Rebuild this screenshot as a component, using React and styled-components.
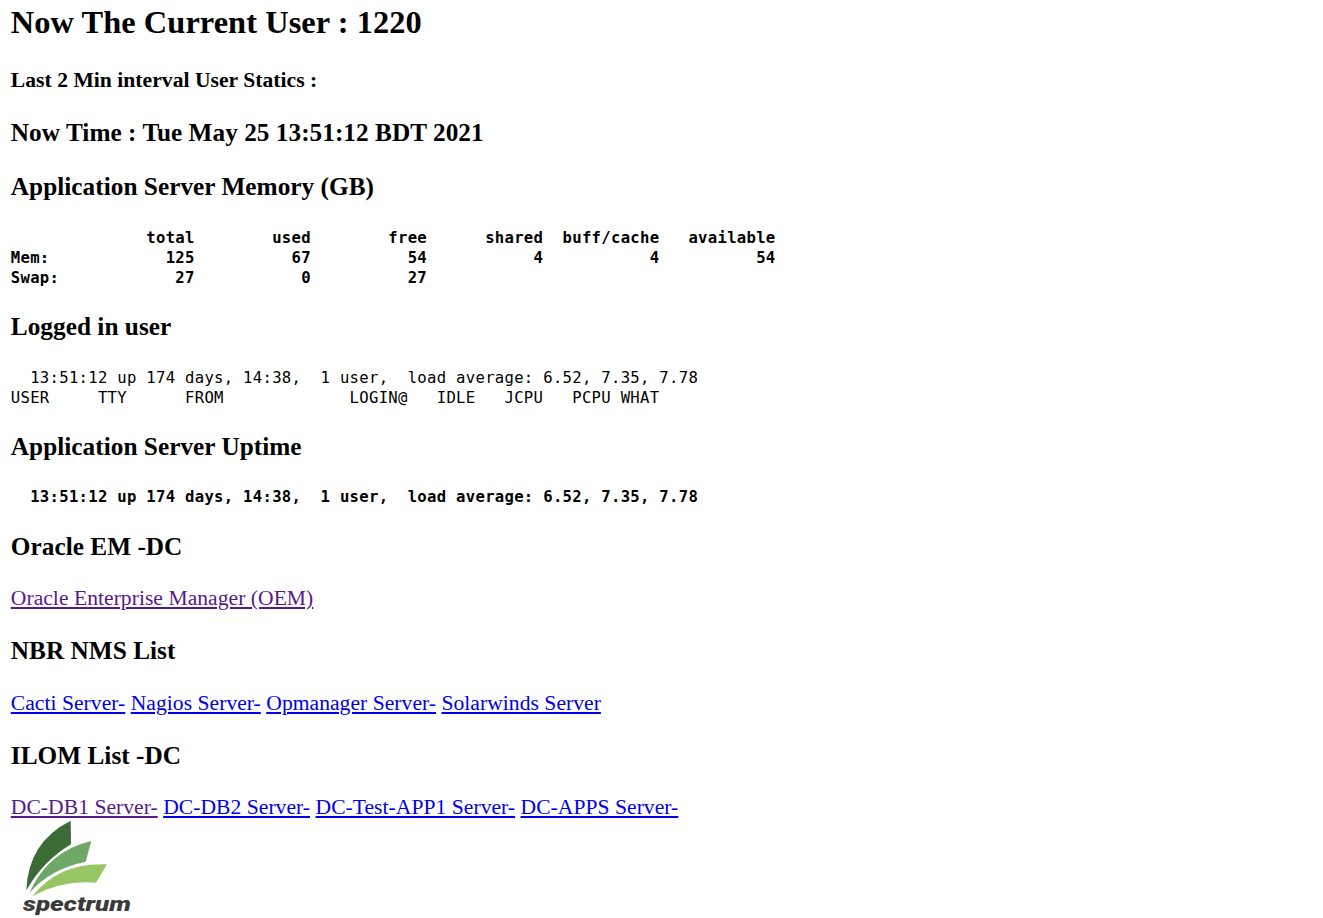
import React from 'react';
import styled, { createGlobalStyle } from 'styled-components';

const GlobalStyle = createGlobalStyle`
    html{ overflow: hidden; }
    body{
        margin: 0; background-color: #fff; color: #000;
        font-family: "Liberation Serif", "Times New Roman", serif;
        font-size: 21.6px; line-height: 25px;
    }
`;

const StatusPage = styled.main`
    padding: 4px 10.8px 0;
`;

const UserCount = styled.h2`
    margin: 0 0 27px;
    font-size: 32.4px; line-height: 37px; letter-spacing: 0.06px;
`;

const Interval = styled.h4`
    margin: 0 0 25px;
    font-size: 21.6px; line-height: 25px; letter-spacing: 0.03px;
`;

const Title = styled.h3`
    margin: 24px 0 25.15px;
    font-size: 25.27px; line-height: 29px; letter-spacing: 0.03px;
`;

const Output = styled.pre`
    margin: 26.55px 0 24.3px;
    font-family: "DejaVu Sans Mono", monospace;
    font-size: 15.6px; line-height: 20px;
    letter-spacing: 0.292px;
    font-weight: ${({ $bold }) => ($bold ? 'bold' : 'normal')};
`;

const Links = styled.div`
    padding-bottom: 1.4px;
    line-height: 25.2px; letter-spacing: 0.03px;
`;

const ServerLink = styled.a`
    color: ${({ $visited }) => ($visited ? '#551a8b' : '#0000ee')};
    text-decoration: underline;
    text-decoration-thickness: 2px;
    text-underline-offset: 2px;
`;

const Logo = styled.svg`
    display: block; width: 130px; height: 98px;
    overflow: visible;
    text{
        font-family: Roboto, sans-serif;
        font-size: 20px; font-weight: 900; font-style: italic;
    }
`;

const memory = `              total        used        free      shared  buff/cache   available
Mem:            125          67          54           4           4          54
Swap:            27           0          27`;

const uptime = '  13:51:12 up 174 days, 14:38,  1 user,  load average: 6.52, 7.35, 7.78';

const sessions = `${uptime}
USER     TTY      FROM             LOGIN@   IDLE   JCPU   PCPU WHAT`;

const oracleLinks = [{ name: 'Oracle Enterprise Manager (OEM)', visited: true }];

const nmsLinks = [
    { name: 'Cacti Server-' },
    { name: 'Nagios Server-' },
    { name: 'Opmanager Server-' },
    { name: 'Solarwinds Server' },
];

const ilomLinks = [
    { name: 'DC-DB1 Server-', visited: true },
    { name: 'DC-DB2 Server-' },
    { name: 'DC-Test-APP1 Server-' },
    { name: 'DC-APPS Server-' },
];

function LinkList({ links }) {
    return (
        <Links>
            {
                links.map(({ name, visited }) => (
                    <React.Fragment key={name}>
                        <ServerLink href="#!" $visited={visited}>{name}</ServerLink>{' '}
                    </React.Fragment>
                ))
            }
        </Links>
    );
}

function SpectrumLogo() {
    return (
        <Logo viewBox="11 822 130 98" role="img" aria-label="spectrum">
            <path fill="#3b6c35" d="M70.7 820.7 L71 844.3 Q43 861 26.3 890.5 Q28 842 70.7 820.7Z" />
            <path fill="#6fa768" d="M91.3 841 L85.7 861.7 Q50 869 29.3 893 Q48 851 91.3 841Z" />
            <path fill="#98c664" d="M107 864.3 L96 882.7 Q62 880 32.3 896.3 Q59 862 107 864.3Z" />
            <text x="23" y="911" textLength="108" lengthAdjust="spacingAndGlyphs" fill="#3a3a3a">spectrum</text>
        </Logo>
    );
}

function App() {
    return (
        <>
            <GlobalStyle />
            <StatusPage>
                <UserCount>Now The Current User : 1220</UserCount>
                <Interval>Last 2 Min interval User Statics :</Interval>
                <Title>Now Time : Tue May 25 13:51:12 BDT 2021</Title>
                <Title>Application Server Memory (GB)</Title>
                <Output $bold>{memory}</Output>
                <Title>Logged in user</Title>
                <Output>{sessions}</Output>
                <Title>Application Server Uptime</Title>
                <Output $bold>{uptime}</Output>
                <Title>Oracle EM -DC</Title>
                <LinkList links={oracleLinks} />
                <Title>NBR NMS List</Title>
                <LinkList links={nmsLinks} />
                <Title>ILOM List -DC</Title>
                <LinkList links={ilomLinks} />
                <SpectrumLogo />
            </StatusPage>
        </>
    );
}

export default App;
